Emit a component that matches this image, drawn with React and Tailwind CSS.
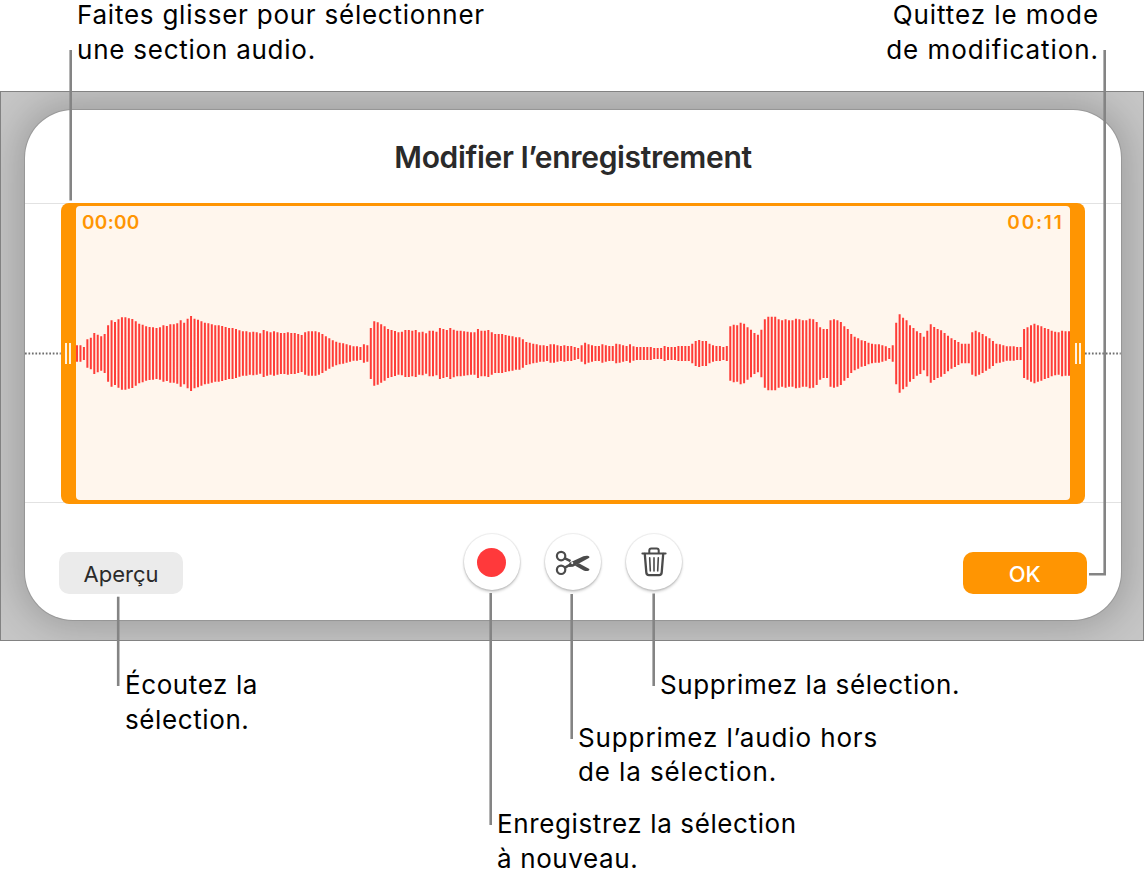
// Upper edge of every bar, in thirds of a pixel; bars are mirrored around WAVE_MID.
const WAVE_TOPS = [
  136, 136, 141, 118, 113, 99, 104, 109, 102, 76, 61, 66, 58, 52, 52, 55, 57, 64, 71, 74,
  79, 81, 82, 84, 82, 76, 78, 73, 73, 70, 61, 68, 56, 48, 56, 59, 64, 68, 70, 73,
  76, 76, 78, 81, 84, 84, 87, 91, 94, 94, 97, 95, 97, 100, 90, 94, 97, 94, 97, 99,
  99, 97, 99, 99, 102, 105, 97, 94, 94, 94, 97, 102, 109, 115, 121, 125, 128, 130, 133, 136,
  139, 139, 141, 133, 136, 84, 64, 67, 73, 79, 87, 90, 93, 97, 95, 90, 90, 92, 90, 97,
  95, 100, 92, 92, 95, 84, 87, 90, 84, 89, 92, 92, 94, 95, 97, 97, 87, 92, 92, 90,
  97, 102, 102, 102, 105, 107, 109, 112, 112, 118, 126, 128, 131, 133, 136, 136, 138, 133, 133, 136,
  138, 136, 138, 138, 141, 144, 136, 128, 133, 136, 138, 138, 133, 136, 138, 138, 131, 133, 136, 138,
  133, 139, 141, 141, 141, 141, 141, 144, 144, 144, 138, 141, 141, 141, 138, 138, 138, 138, 131, 123,
  120, 123, 123, 131, 136, 138, 138, 141, 138, 79, 74, 76, 68, 71, 82, 89, 99, 104, 89, 58,
  50, 50, 50, 58, 61, 58, 61, 61, 56, 58, 61, 61, 56, 58, 66, 82, 87, 87, 61, 58,
  61, 66, 79, 87, 102, 110, 115, 121, 123, 128, 131, 133, 133, 136, 139, 144, 136, 68, 43, 53,
  61, 76, 84, 94, 99, 110, 92, 73, 81, 87, 91, 99, 107, 115, 120, 126, 131, 131, 131, 97,
  92, 97, 102, 109, 115, 123, 131, 133, 136, 139, 139, 139, 141, 141, 87, 82, 76, 71, 76, 79,
  84, 87, 92, 95, 97, 92, 94, 94,
];
const WAVE_MID = 160.5;

function Waveform() {
  const step = 992 / (WAVE_TOPS.length - 1);
  const d = WAVE_TOPS.map((top, i) => {
    const half = (WAVE_MID - top) / 3;
    return `M${(1 + i * step).toFixed(2)} ${(40.5 - half).toFixed(2)}v${(half * 2).toFixed(2)}`;
  }).join("");

  return (
    <svg className="block w-[994px] h-20" viewBox="0 0 994 80">
      <path d={d} stroke="#ff3d38" strokeWidth="2" />
    </svg>
  );
}

function Handle() {
  return (
    <div className="w-[15.25px] shrink-0 flex items-center justify-center gap-[2px]">
      <span className="w-[2px] h-[21px] bg-[#fff3e2]" />
      <span className="w-[2px] h-[21px] bg-[#fff3e2]" />
    </div>
  );
}

function DottedLine() {
  return (
    <svg className="flex-1 h-[3px] mt-[1px]" preserveAspectRatio="none">
      <line x1="0" y1="1.5" x2="100%" y2="1.5" stroke="#6e6e6e" strokeWidth="2" strokeDasharray="1.7 1.77" />
    </svg>
  );
}

function Selection() {
  return (
    <div className="h-[300px] mt-[93px] flex items-center border-y border-[#e2e2e2]">
      <DottedLine />
      <div className="w-[1024.5px] h-[301px] shrink-0 flex rounded-[8px] bg-[#ff9502]">
        <Handle />
        <div className="w-[994px] my-[3.5px] rounded-[4px] bg-[#fff6ed] flex flex-col">
          <div className="flex justify-between pl-[6px] pr-[6.5px] pt-[6px] h-[107px] text-[19px] leading-[22px] font-semibold text-[#ff9502]">
            <span className="tracking-[0.3px]">00:00</span>
            <span className="tracking-[1.8px]">00:11</span>
          </div>
          <Waveform />
        </div>
        <Handle />
      </div>
      <DottedLine />
    </div>
  );
}

function RoundButton({ label, children }) {
  return (
    <button
      aria-label={label}
      className="size-14 rounded-full bg-white flex items-center justify-center shadow-[0_0_1px_1px_rgba(0,0,0,0.07),0_2px_3px_rgba(0,0,0,0.22)]"
    >
      {children}
    </button>
  );
}

function ScissorsIcon() {
  return (
    <svg width="36" height="28" viewBox="0 -0.5 36 28" fill="none" stroke="#4b4b4b">
      <circle cx="6.1" cy="7.6" r="4.2" strokeWidth="2.2" />
      <circle cx="6.1" cy="21.3" r="4.2" strokeWidth="2.2" />
      <path d="M10 9.8l5.5 2.8M10 19.1l6.2-3.6" strokeWidth="2.6" />
      <path d="M14.4 14.2L28.4 7.8c2.4-1 5.1-.9 5.9.4v1L18 18.2l-4 .4z" fill="#4b4b4b" stroke="none" />
      <path d="M19.8 17.1l4-2.3L34.3 20.6v.9c-.8 1.2-3.4 1.3-5.6.4z" fill="#4b4b4b" stroke="none" />
      <circle cx="17.2" cy="14.6" r="1.1" fill="#fff" stroke="none" />
    </svg>
  );
}

function TrashIcon() {
  return (
    <svg width="26" height="30" viewBox="0 0.4 26 30" fill="none" stroke="#4b4b4b" strokeLinecap="round" strokeLinejoin="round">
      <path d="M1.4 6.9h23.2" strokeWidth="2" />
      <path d="M8.3 6.3V3.8q0-2 2-2h5.4q2 0 2 2v2.5" strokeWidth="2" />
      <path d="M3.8 7.3l1.5 18.5q.2 2.7 2.6 2.7h10.2q2.4 0 2.6-2.7L22.2 7.3" strokeWidth="2.3" />
      <path d="M8.7 11.3l.6 13M13 11.3v13M17.3 11.3l-.6 13" strokeWidth="1.6" />
    </svg>
  );
}

function Toolbar() {
  return (
    <div className="flex items-start justify-between pl-[34px] pr-[34px] pt-[31px]">
      <button className="w-[124px] h-[42px] mt-[18px] pt-[2px] rounded-[10px] bg-[#ebebeb] text-[22px] text-[#2a2a2a]">
        Aperçu
      </button>
      <div className="flex gap-[25px]">
        <RoundButton label="Enregistrer">
          <span className="size-[29px] rounded-full bg-[#ff393b]" />
        </RoundButton>
        <RoundButton label="Rogner">
          <ScissorsIcon />
        </RoundButton>
        <RoundButton label="Supprimer">
          <TrashIcon />
        </RoundButton>
      </div>
      <button className="w-[124.5px] h-[42px] mt-[18px] pt-[2px] rounded-[10px] bg-[#ff9502] text-[22px] font-medium text-white">
        OK
      </button>
    </div>
  );
}

function Leaders() {
  return (
    <svg
      className="absolute inset-0 pointer-events-none"
      width="1144"
      height="886"
      fill="none"
      stroke="#848484"
      strokeWidth="2.6"
    >
      <path d="M70.7 50V200.5" />
      <path d="M1104.7 50V574.3H1089" />
      <path d="M118.2 596.7V686" />
      <path d="M490.7 593V825" />
      <path d="M571.7 594V739" />
      <path d="M653.7 593.5V686" />
    </svg>
  );
}

function App() {
  return (
    <div className="relative w-[1144px] h-[886px] bg-white text-black font-['Inter','Liberation_Sans',sans-serif] text-[26px] leading-[34.7px]">
      <div className="h-[91px] flex justify-between pl-[77px] pr-[45px]">
        <p className="-mt-[2px] tracking-[0.76px]">
          Faites glisser pour sélectionner
          <br />
          une section audio.
        </p>
        <p className="-mt-[2px] tracking-[0.93px] text-right">
          Quittez le mode
          <br />
          de modification.
        </p>
      </div>

      <div className="h-[550px] border border-[#828282] bg-[#c6c6c6] pt-[18px] pl-[24px] pr-[22px] overflow-hidden">
        <div className="h-[509.5px] rounded-[48px] bg-white overflow-hidden shadow-[0_0_0_1px_rgba(0,0,0,0.12),0_0_40px_6px_rgba(0,0,0,0.22)]">
          <h1 className="h-0 pt-[30px] text-center text-[30px] leading-[34px] tracking-[-0.33px] font-semibold text-[#2a2a2a]">
            Modifier l’enregistrement
          </h1>
          <div className="-mt-[30px]">
            <Selection />
            <Toolbar />
          </div>
        </div>
      </div>

      <div className="flex pl-[125px] pt-[27px]">
        <p className="w-[372px] tracking-[0.6px]">
          Écoutez la
          <br />
          sélection.
        </p>
        <div className="whitespace-nowrap">
          <p className="ml-[163px] tracking-[0.6px]">Supprimez la sélection.</p>
          <p className="ml-[81px] mt-[17.8px] tracking-[0.88px]">
            Supprimez l’audio hors
            <br />
            de la sélection.
          </p>
          <p className="mt-[17.2px] tracking-[0.62px]">
            Enregistrez la sélection
            <br />à nouveau.
          </p>
        </div>
      </div>

      <Leaders />
    </div>
  );
}

export default App;
